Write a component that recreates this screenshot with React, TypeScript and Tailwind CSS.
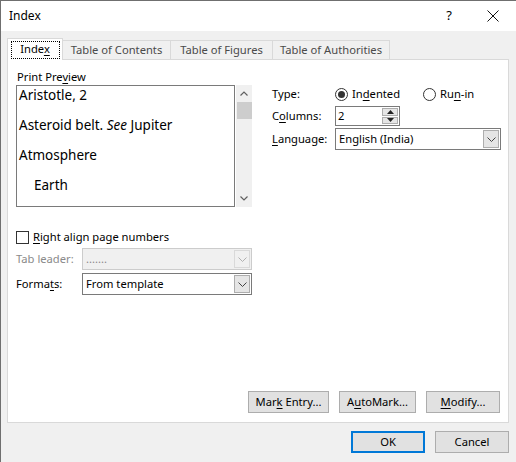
import React from 'react';

const font = { fontFamily: '"Noto Sans", "Open Sans", sans-serif' };

function U({ children }: { children: React.ReactNode }) {
  return <span className="underline underline-offset-2">{children}</span>;
}

function Chevron({ color = '#444' }: { color?: string }) {
  return (
    <svg width="9" height="5" viewBox="0 0 9 5">
      <polyline points="0.5,0.5 4.5,4.5 8.5,0.5" fill="none" stroke={color} strokeWidth="1" />
    </svg>
  );
}

function Select({ value, width, disabled }: { value: string; width: string; disabled?: boolean }) {
  return (
    <div
      className={`flex h-[22px] items-stretch border ${width} ${
        disabled ? 'border-[#cccccc] bg-[#f0f0f0] text-[#8a8a8a]' : 'border-[#7a7a7a] bg-white text-black'
      }`}
    >
      <div className="flex flex-1 items-center pl-[3px] leading-none">{value}</div>
      <div
        className={`my-px mr-px flex w-[16px] items-center justify-center border ${
          disabled ? 'border-[#d9d9d9] bg-[#f0f0f0]' : 'border-[#adadad] bg-[#e5e5e5]'
        }`}
      >
        <Chevron color={disabled ? '#b0b0b0' : '#444'} />
      </div>
    </div>
  );
}

function Radio({ checked, label }: { checked?: boolean; label: React.ReactNode }) {
  return (
    <div className="flex items-center gap-[4px]">
      <div className="flex h-[13px] w-[13px] items-center justify-center rounded-full border border-[#333] bg-white">
        {checked && <div className="h-[7px] w-[7px] rounded-full bg-[#333]" />}
      </div>
      <span>{label}</span>
    </div>
  );
}

function Btn({ children, w, primary }: { children: React.ReactNode; w: string; primary?: boolean }) {
  return (
    <div
      className={`flex h-[22px] items-center justify-center bg-[#e1e1e1] ${w} ${
        primary ? 'border-2 border-[#0078d7]' : 'border border-[#adadad]'
      }`}
    >
      <span>{children}</span>
    </div>
  );
}

export default function App() {
  const tabs = ['Table of Contents', 'Table of Figures', 'Table of Authorities'];
  const tabW = ['w-[108px]', 'w-[102px]', 'w-[117px]'];

  return (
    <div style={font} className="flex h-[462px] w-[516px] flex-col border-l border-t border-[#6f6f6f] bg-[#f0f0f0] text-[11.2px] text-black">
      {/* title bar */}
      <div className="flex h-[30px] items-center bg-white pl-[8px] text-[12px]">
        <span className="flex-1">Index</span>
        <span className="w-[20px] text-center text-[13px]">?</span>
        <div className="ml-[27px] mr-[16px] flex w-[14px] justify-center">
          <svg width="12" height="12" viewBox="0 0 12 12">
            <path d="M0.5 0.5 L11.5 11.5 M11.5 0.5 L0.5 11.5" stroke="#111" strokeWidth="1" />
          </svg>
        </div>
      </div>

      {/* tabs */}
      <div className="mt-[7px] flex h-[21px] items-end pl-[6px]">
        <div className="relative z-10 -mb-px flex h-[22px] w-[56px] items-center justify-center border border-b-0 border-[#d9d9d9] bg-white">
          <div className="flex h-[16px] w-[47px] items-center justify-center outline-1 outline-dotted outline-black">
            <span>
              Inde<U>x</U>
            </span>
          </div>
        </div>
        {tabs.map((t, i) => (
          <div
            key={t}
            className={`flex h-[19px] ${tabW[i]} items-center justify-center border border-b-0 border-l-0 border-[#d9d9d9] text-[#4a4a4a]`}
          >
            {t}
          </div>
        ))}
      </div>

      {/* panel */}
      <div className="mx-[6px] flex h-[364px] w-[502px] flex-col border border-[#d9d9d9] bg-white px-[8px] pb-[9px] pt-[9px]">
        <div className="flex flex-1 gap-[20px]">
          {/* left column */}
          <div className="flex w-[236px] flex-col">
            <div className="ml-[1px] h-[15px] leading-[15px]">
              Print Pre<U>v</U>iew
            </div>
            <div className="mt-px flex h-[122px]">
              <div className="flex w-[220px] flex-col border border-[#7a7a7a] pl-[2px] text-[13.5px] leading-[30px]">
                <div className="-mt-[6px]">Aristotle, 2</div>
                <div>
                  Asteroid belt. <i>See</i> Jupiter
                </div>
                <div>Atmosphere</div>
                <div className="pl-[15px]">Earth</div>
              </div>
              <div className="ml-px flex w-[16px] flex-col items-center bg-[#f0f0f0]">
                <div className="flex h-[17px] items-center">
                  <svg width="8" height="5" viewBox="0 0 8 5">
                    <polyline points="0.5,4.5 4,1 7.5,4.5" fill="none" stroke="#606060" strokeWidth="1.2" />
                  </svg>
                </div>
                <div className="h-[17px] w-[15px] bg-[#cdcdcd]" />
                <div className="flex-1" />
                <div className="flex h-[17px] items-center">
                  <svg width="8" height="5" viewBox="0 0 8 5">
                    <polyline points="0.5,0.5 4,4 7.5,0.5" fill="none" stroke="#606060" strokeWidth="1.2" />
                  </svg>
                </div>
              </div>
            </div>

            <div className="mt-[22px] flex h-[16px] items-center gap-[4px]">
              <div className="h-[13px] w-[13px] border border-[#333] bg-white" />
              <span>
                <U>R</U>ight align page numbers
              </span>
            </div>
            <div className="mt-[3px] flex items-center">
              <span className="w-[66px] text-[#8a8a8a]">Tab leader:</span>
              <Select value="......." width="w-[170px]" disabled />
            </div>
            <div className="mt-[3px] flex items-center">
              <span className="w-[66px]">
                Forma<U>t</U>s:
              </span>
              <Select value="From template" width="w-[170px]" />
            </div>
          </div>

          {/* right column */}
          <div className="flex flex-1 flex-col pt-[18px]">
            <div className="flex h-[14px] items-center">
              <span className="w-[63px]">Type:</span>
              <div className="w-[88px]">
                <Radio checked label={<>In<U>d</U>ented</>} />
              </div>
              <Radio label={<>Ru<U>n</U>-in</>} />
            </div>
            <div className="mt-[5px] flex items-center">
              <span className="w-[63px]">
                C<U>o</U>lumns:
              </span>
              <div className="flex h-[20px] w-[65px] border border-[#7a7a7a] bg-white">
                <div className="flex flex-1 items-center pl-[2px]">2</div>
                <div className="my-px mr-px flex w-[16px] flex-col gap-px">
                  <div className="flex flex-1 items-center justify-center border border-[#adadad] bg-[#e5e5e5]">
                    <svg width="7" height="4" viewBox="0 0 7 4">
                      <polygon points="0,4 3.5,0 7,4" fill="#222" />
                    </svg>
                  </div>
                  <div className="flex flex-1 items-center justify-center border border-[#adadad] bg-[#e5e5e5]">
                    <svg width="7" height="4" viewBox="0 0 7 4">
                      <polygon points="0,0 3.5,4 7,0" fill="#222" />
                    </svg>
                  </div>
                </div>
              </div>
            </div>
            <div className="mt-[2px] flex items-center">
              <span className="w-[63px]">
                <U>L</U>anguage:
              </span>
              <Select value="English (India)" width="w-[166px]" />
            </div>
          </div>
        </div>

        <div className="flex justify-end gap-[10px]">
          <Btn w="w-[81px]">
            Mar<U>k</U> Entry...
          </Btn>
          <Btn w="w-[77px]">
            A<U>u</U>toMark...
          </Btn>
          <Btn w="w-[74px]">
            <U>M</U>odify...
          </Btn>
        </div>
      </div>

      {/* footer */}
      <div className="mt-[8px] flex justify-end gap-[10px] pr-[7px]">
        <Btn w="w-[74px]" primary>
          OK
        </Btn>
        <Btn w="w-[74px]">Cancel</Btn>
      </div>
    </div>
  );
}
